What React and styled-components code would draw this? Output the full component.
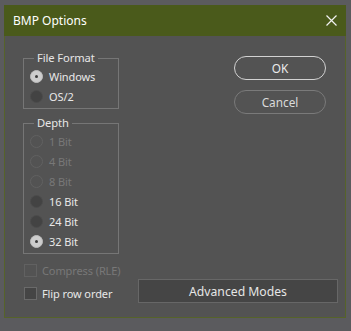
import React from "react";
import styled, { createGlobalStyle, css } from "styled-components";

const Global = createGlobalStyle`
  html, body { margin: 0; padding: 0; background: #5b5b5e; }
  body { font-family: "Noto Sans", "Open Sans", sans-serif; }
  * { box-sizing: border-box; }
`;

const Page = styled.div`
  width: 351px;
  height: 331px;
  padding: 5px 0 0 4px;
  background: #5b5b5e;
`;

const Dialog = styled.div`
  width: 342px;
  height: 313px;
  border: 1px solid #56632a;
  background: #535353;
  display: flex;
  flex-direction: column;
`;

const TitleBar = styled.div`
  height: 31px;
  background: #4a5a1b;
  display: flex;
  align-items: center;
  justify-content: space-between;
  padding: 0 8px 0 9px;
  margin: -1px -1px 0 -1px;
`;

const Title = styled.span`
  color: #ffffff;
  font-size: 12px;
`;

const CloseBtn = styled.button`
  width: 14px;
  height: 14px;
  padding: 0;
  border: 0;
  background: transparent;
  display: flex;
  align-items: center;
  justify-content: center;
`;

const Body = styled.div`
  flex: 1;
  padding: 22px 7px 0 18px;
  display: flex;
  flex-direction: column;
`;

const TopRow = styled.div`
  display: flex;
  justify-content: space-between;
`;

const LeftCol = styled.div`
  display: flex;
  flex-direction: column;
  gap: 14px;
  width: 96px;
`;

const Group = styled.div`
  position: relative;
  border: 1px solid #767676;
  padding: 7px 0 2px 6px;
`;

const Legend = styled.span`
  position: absolute;
  top: -8px;
  left: 10px;
  padding: 0 3px;
  background: #535353;
  color: #e6e6e6;
  font-size: 11.2px;
  line-height: 14px;
  letter-spacing: -0.1px;
`;

const Row = styled.label`
  height: 20px;
  display: flex;
  align-items: center;
  gap: 6px;
  font-size: 11px;
  letter-spacing: -0.1px;
  color: ${(p) => (p.$disabled ? "#787878" : "#e8e8e8")};
`;

const RadioDot = styled.span`
  width: 13px;
  height: 13px;
  border-radius: 50%;
  flex: none;
  display: flex;
  align-items: center;
  justify-content: center;
  ${(p) =>
    p.$checked
      ? css`
          background: #cdcdcd;
          border: 1px solid #bdbdbd;
          &::after {
            content: "";
            width: 3px;
            height: 3px;
            border-radius: 50%;
            background: #3c3c3c;
          }
        `
      : p.$disabled
      ? css`
          background: transparent;
          border: 1px solid #616161;
        `
      : css`
          background: #434343;
          border: 1px solid #4c4c4c;
        `}
`;

const RightCol = styled.div`
  display: flex;
  flex-direction: column;
  gap: 10px;
  margin: -2px 12px 0 0;
`;

const PillButton = styled.button`
  width: 92px;
  height: 24px;
  border-radius: 12px;
  background: transparent;
  font-family: inherit;
  font-size: 11.8px;
  padding: 0;
  color: ${(p) => (p.$primary ? "#ebebeb" : "#dadada")};
  border: ${(p) => (p.$primary ? "1.5px solid #d2d2d2" : "1px solid #7a7a7a")};
`;

const BottomRow = styled.div`
  display: flex;
  align-items: flex-end;
  margin-top: 5px;
`;

const CheckCol = styled.div`
  width: 115px;
  display: flex;
  flex-direction: column;
  padding-left: 1px;
`;

const CheckRow = styled.label`
  height: 23px;
  display: flex;
  align-items: center;
  gap: 5px;
  font-size: 11px;
  letter-spacing: -0.1px;
  white-space: nowrap;
  color: ${(p) => (p.$disabled ? "#787878" : "#e8e8e8")};
`;

const Box = styled.span`
  width: 13px;
  height: 13px;
  flex: none;
  background: ${(p) => (p.$disabled ? "transparent" : "#454545")};
  border: 1px solid ${(p) => (p.$disabled ? "#616161" : "#6a6a6a")};
`;

const WideButton = styled.button`
  width: 200px;
  height: 24px;
  margin-bottom: 2px;
  background: #454545;
  border: 1px solid #676767;
  color: #e6e6e6;
  font-family: inherit;
  font-size: 12.2px;
  padding: 0;
`;

const Radio = ({ label, checked, disabled }) => (
  <Row $disabled={disabled}>
    <RadioDot $checked={checked} $disabled={disabled} />
    {label}
  </Row>
);

export default function App() {
  return (
    <Page>
      <Global />
      <Dialog>
        <TitleBar>
          <Title>BMP Options</Title>
          <CloseBtn aria-label="Close">
            <svg width="11" height="11" viewBox="0 0 11 11">
              <path d="M0.5 0.5L10.5 10.5M10.5 0.5L0.5 10.5" stroke="#f2f2f2" strokeWidth="1.2" />
            </svg>
          </CloseBtn>
        </TitleBar>
        <Body>
          <TopRow>
            <LeftCol>
              <Group>
                <Legend>File Format</Legend>
                <Radio label="Windows" checked />
                <Radio label="OS/2" />
              </Group>
              <Group>
                <Legend>Depth</Legend>
                <Radio label="1 Bit" disabled />
                <Radio label="4 Bit" disabled />
                <Radio label="8 Bit" disabled />
                <Radio label="16 Bit" />
                <Radio label="24 Bit" />
                <Radio label="32 Bit" checked />
              </Group>
            </LeftCol>
            <RightCol>
              <PillButton $primary>OK</PillButton>
              <PillButton>Cancel</PillButton>
            </RightCol>
          </TopRow>
          <BottomRow>
            <CheckCol>
              <CheckRow $disabled>
                <Box $disabled />
                Compress (RLE)
              </CheckRow>
              <CheckRow>
                <Box />
                Flip row order
              </CheckRow>
            </CheckCol>
            <WideButton>Advanced Modes</WideButton>
          </BottomRow>
        </Body>
      </Dialog>
    </Page>
  );
}
